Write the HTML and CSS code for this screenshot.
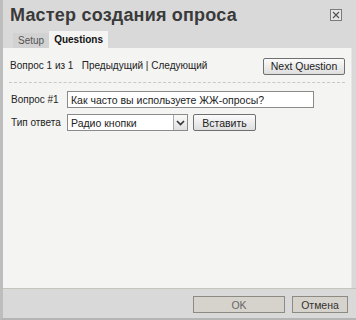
FILE: index.html
```html
<!DOCTYPE html>
<html lang="ru">
<head>
    <meta charset="UTF-8">
    <title>Мастер создания опроса</title>
    <link rel="stylesheet" href="styles.css">
</head>
<body>
    <div class="dialog">
        <div class="dialog-head">
            <h1>Мастер создания опроса</h1>
            <span class="close">
                <svg width="12" height="12" viewBox="0 0 12 12">
                    <rect x="0.5" y="0.5" width="11" height="11" fill="#e6e6e6" stroke="#7a7a7a"/>
                    <path d="M3 3 L9 9 M9 3 L3 9" stroke="#555" stroke-width="1.2"/>
                </svg>
            </span>
        </div>
        <div class="tabs">
            <span class="tab">Setup</span>
            <span class="tab active">Questions</span>
        </div>
        <div class="panel">
            <div class="nav-row">
                <span>Вопрос 1 из 1 &nbsp; Предыдущий | Следующий</span>
                <button class="btn next">Next Question</button>
            </div>
            <div class="form">
                <div class="field">
                    <label>Вопрос #1</label>
                    <input type="text" class="question" value="Как часто вы используете ЖЖ-опросы?">
                </div>
                <div class="field">
                    <label>Тип ответа</label>
                    <div class="select">
                        <span>Радио кнопки</span>
                        <span class="arrow">
                            <svg width="9" height="6" viewBox="0 0 9 6"><path d="M1 1 L4.5 4.5 L8 1" fill="none" stroke="#333" stroke-width="1.6"/></svg>
                        </span>
                    </div>
                    <button class="btn insert">Вставить</button>
                </div>
            </div>
        </div>
        <div class="dialog-foot">
            <button class="btn ok">OK</button>
            <button class="btn cancel">Отмена</button>
        </div>
    </div>
</body>
</html>
```

FILE: styles.css
```css
body {
    margin: 0;
    font-family: "Liberation Sans", Arial, sans-serif;
    background-color: #d9d9d9;
}
.dialog {
    width: 356px;
    height: 320px;
    box-sizing: border-box;
    border-left: 3px solid #bdbdbd;
    border-bottom: 2px solid #b5b5b5;
    background-color: #d9d9d9;
    display: flex;
    flex-direction: column;
}
.dialog-head {
    height: 31px;
    display: flex;
    justify-content: space-between;
    align-items: center;
    padding: 0 14px 0 7px;
}
h1 {
    margin: 0;
    font-size: 18px;
    font-weight: bold;
    color: #3a3a3a;
    letter-spacing: 0.2px;
}
.close {
    display: flex;
    margin-top: -2px;
}
.tabs {
    display: flex;
    align-items: flex-end;
    padding-left: 10px;
    height: 17px;
}
.tab {
    font-size: 10px;
    color: #555;
    padding: 0 5px;
    height: 15px;
    line-height: 15px;
    background-color: #d2d2d2;
}
.tab.active {
    background-color: #f4f4f2;
    color: #111;
    font-weight: bold;
    height: 17px;
    line-height: 18px;
    padding: 0 5px;
}
.panel {
    flex: 1;
    background-color: #f4f4f2;
    margin-right: 4px;
    border-right: 1px solid #e6e6e6;
    padding: 0 6px;
    font-size: 10px;
    color: #222;
}
.nav-row {
    display: flex;
    justify-content: space-between;
    align-items: center;
    height: 34px;
    padding: 0 0 0 1px;
    border-bottom: 1px dashed #c8c8c8;
}
.btn {
    font-family: "Liberation Sans", Arial, sans-serif;
    font-size: 10.5px;
    color: #222;
    background: linear-gradient(#fbfbfb, #dedede);
    border: 1px solid #707070;
    border-radius: 2px;
    padding: 0;
    height: 17px;
}
.next {
    width: 82px;
    margin-top: 2px;
}
.form {
    padding: 8px 0 0 2px;
    display: flex;
    flex-direction: column;
    gap: 6px;
}
.field {
    display: flex;
    align-items: center;
    gap: 4px;
}
.field label {
    width: 52px;
    white-space: nowrap;
}
input.question {
    width: 247px;
    height: 17px;
    box-sizing: border-box;
    border: 1px solid #8a8a8a;
    background-color: #fff;
    padding: 0 3px;
    margin: 0;
    font-family: "Liberation Sans", Arial, sans-serif;
    font-size: 10.5px;
    color: #222;
}
.select {
    width: 121px;
    height: 17px;
    box-sizing: border-box;
    border: 1px solid #8a8a8a;
    background-color: #fff;
    display: flex;
    justify-content: space-between;
    align-items: center;
    padding-left: 3px;
    font-size: 10.5px;
}
.arrow {
    width: 14px;
    height: 15px;
    box-sizing: border-box;
    border-left: 1px solid #aaa;
    background: linear-gradient(#fafafa, #e0e0e0);
    display: flex;
    justify-content: center;
    align-items: center;
}
.insert {
    width: 63px;
    margin-left: 1px;
}
.dialog-foot {
    height: 30px;
    box-sizing: border-box;
    border-top: 1px solid #c4c4bc;
    display: flex;
    justify-content: flex-end;
    align-items: flex-start;
    gap: 7px;
    padding: 7px 8px 0 0;
}
.ok, .cancel {
    background: #d6d3cc;
    border: 1px solid #8d8a84;
    border-radius: 0;
    color: #666;
    height: 17px;
}
.ok {
    width: 92px;
}
.cancel {
    width: 56px;
    color: #333;
}
```
